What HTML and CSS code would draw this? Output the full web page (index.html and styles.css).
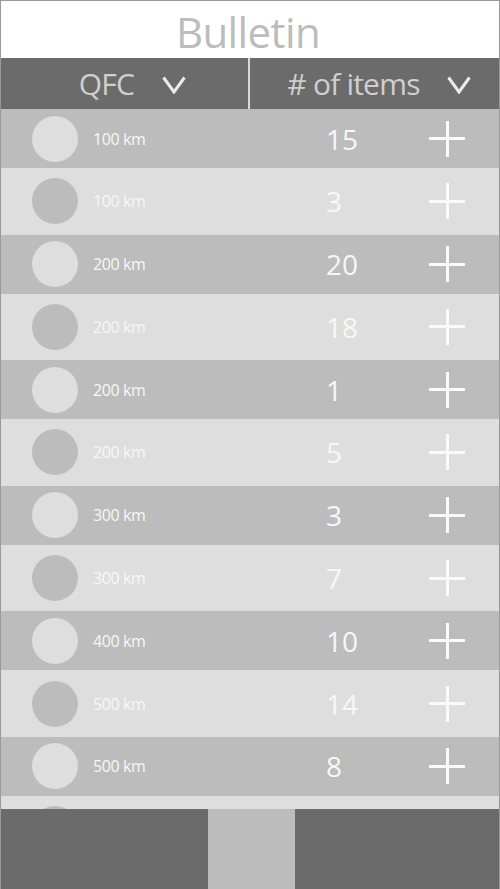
FILE: index.html
```html
<!DOCTYPE html>
<html>
<head>
<meta charset="utf-8">
<link rel="stylesheet" href="styles.css">
</head>
<body>
<div class="app">
  <header class="title">Bulletin</header>
  <div class="filters">
    <div class="filter filter-left"><span class="filter-label">QFC</span><svg class="chev" viewBox="0 0 24 18"><path d="M1.5 1.5 L12 16 L22.5 1.5"/></svg></div>
    <div class="filter filter-right"><span class="filter-label">#&nbsp;of items</span><svg class="chev" viewBox="0 0 24 18"><path d="M1.5 1.5 L12 16 L22.5 1.5"/></svg></div>
  </div>
  <div class="list">
    <div class="row dark"><span class="dot"></span><span class="dist">100 km</span><span class="count">15</span><span class="plus"></span></div>
    <div class="row light"><span class="dot"></span><span class="dist">100 km</span><span class="count">3</span><span class="plus"></span></div>
    <div class="row dark"><span class="dot"></span><span class="dist">200 km</span><span class="count">20</span><span class="plus"></span></div>
    <div class="row light"><span class="dot"></span><span class="dist">200 km</span><span class="count">18</span><span class="plus"></span></div>
    <div class="row dark"><span class="dot"></span><span class="dist">200 km</span><span class="count">1</span><span class="plus"></span></div>
    <div class="row light"><span class="dot"></span><span class="dist">200 km</span><span class="count">5</span><span class="plus"></span></div>
    <div class="row dark"><span class="dot"></span><span class="dist">300 km</span><span class="count">3</span><span class="plus"></span></div>
    <div class="row light"><span class="dot"></span><span class="dist">300 km</span><span class="count">7</span><span class="plus"></span></div>
    <div class="row dark"><span class="dot"></span><span class="dist">400 km</span><span class="count">10</span><span class="plus"></span></div>
    <div class="row light"><span class="dot"></span><span class="dist">500 km</span><span class="count">14</span><span class="plus"></span></div>
    <div class="row dark"><span class="dot"></span><span class="dist">500 km</span><span class="count">8</span><span class="plus"></span></div>
    <div class="row light"><span class="dot"></span></div>
  </div>
  <footer class="bottom">
    <div class="bottom-btn"></div>
  </footer>
</div>
</body>
</html>
```
FILE: styles.css
```css
* { box-sizing: border-box; }
html, body { margin: 0; padding: 0; }
body { background: #fff; font-family: "Open Sans", "Liberation Sans", sans-serif; }
.app {
  width: 500px;
  height: 889px;
  display: flex;
  flex-direction: column;
  border: 1px solid #9a9a9a;
  border-bottom: 0;
  overflow: hidden;
}
.title {
  height: 57px;
  flex: none;
  text-align: center;
  color: #bcbcbc;
  font-size: 42px;
  line-height: 62px;
  letter-spacing: -0.6px;
  padding-right: 4px;
}
.filters {
  height: 51px;
  flex: none;
  display: flex;
  background: #6b6b6b;
}
.filter {
  display: flex;
  align-items: center;
  justify-content: center;
  color: #cfcfcf;
  font-size: 30px;
  letter-spacing: -0.8px;
}
.filter-left { width: 249px; border-right: 2px solid #d8d8d8; gap: 28px; padding-left: 16px; }
.filter-right { flex: 1; gap: 27px; padding-left: 9px; }
.chev { width: 24px; height: 18px; fill: none; stroke: #ececec; stroke-width: 3; margin-top: 2px; flex: none; }
.list { flex: 1; overflow: hidden; }
.row {
  display: flex;
  align-items: center;
  padding-left: 31px;
  color: #f7f7f7;
}
.row.dark { background: #bcbcbc; height: 59px; }
.row.light { background: #dedede; height: 66.6px; }
.dot { width: 46px; height: 46px; border-radius: 50%; flex: none; }
.dark .dot { background: #dedede; }
.light .dot { background: #bcbcbc; }
.dist { font-size: 16px; margin-left: 15px; width: 233px; letter-spacing: -0.4px; }
.count { font-size: 28px; width: 103px; }
.plus { width: 36px; height: 36px; position: relative; flex: none; }
.plus::before, .plus::after { content: ""; position: absolute; background: #fafafa; }
.plus::before { left: 0; right: 0; top: 16.5px; height: 3px; }
.plus::after { top: 0; bottom: 0; left: 16.5px; width: 3px; }
.bottom {
  height: 80px;
  flex: none;
  background: #6b6b6b;
  display: flex;
  justify-content: center;
  padding-left: 3px;
}
.bottom-btn { width: 87px; background: #bcbcbc; }
```
